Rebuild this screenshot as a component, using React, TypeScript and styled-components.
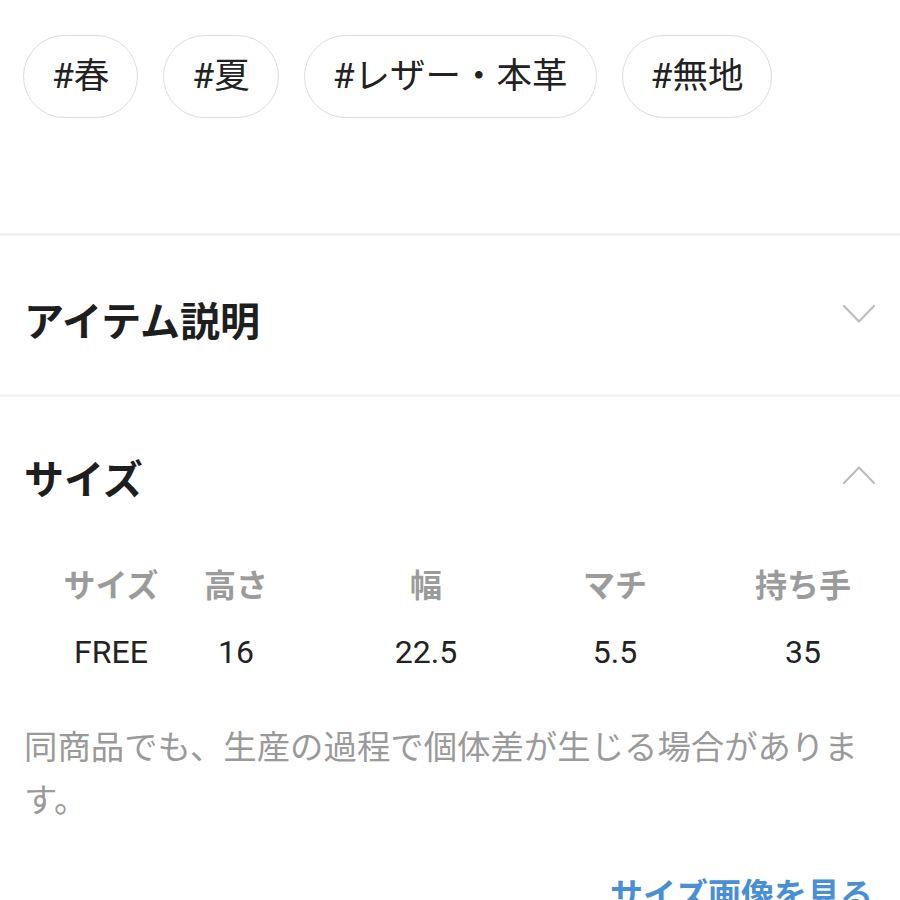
import React from "react";
import styled, { createGlobalStyle } from "styled-components";

const Global = createGlobalStyle`
  html, body { margin: 0; padding: 0; background: #fff; }
  body {
    font-family: Roboto, "Noto Sans CJK JP", sans-serif;
    color: #222;
    -webkit-font-smoothing: antialiased;
  }
`;

const Page = styled.div`
  width: 900px;
  height: 900px;
  overflow: hidden;
  background: #fff;
`;

const TagRow = styled.div`
  display: flex;
  gap: 25px;
  padding: 35px 23px 0;
`;

const Tag = styled.div`
  height: 83px;
  box-sizing: border-box;
  padding: 0 28px;
  display: flex;
  align-items: center;
  border: 1.5px solid #dcdcdc;
  border-radius: 42px;
  font-size: 35.5px;
  line-height: 1;
  color: #222;
  white-space: nowrap;
`;

const Divider = styled.div<{ $top: number }>`
  height: 3px;
  background: #f2f2f2;
  margin-top: ${(p) => p.$top}px;
`;

const SectionHeader = styled.div<{ $top: number; $bottom: number }>`
  display: flex;
  justify-content: space-between;
  align-items: flex-start;
  padding: ${(p) => p.$top}px 25px ${(p) => p.$bottom}px 24px;
`;

const Heading = styled.h2`
  margin: 0;
  font-size: 40px;
  line-height: 1;
  font-weight: 700;
  color: #1e1e1e;
`;

const ChevronBox = styled.svg<{ $shift: number }>`
  display: block;
  width: 32px;
  height: 18px;
  margin-top: ${(p) => p.$shift}px;
`;

const Table = styled.div`
  display: flex;
  flex-direction: column;
  gap: 34px;
  padding: 69px 24px 0;
`;

const TRow = styled.div`
  display: flex;
`;

const Cell = styled.div<{ $offset: number; $head?: boolean }>`
  width: 110px;
  flex: none;
  margin-left: ${(p) => p.$offset}px;
  text-align: center;
  font-size: 32px;
  line-height: 1;
  font-weight: ${(p) => (p.$head ? 700 : 400)};
  color: ${(p) => (p.$head ? "#9b9b9b" : "#222")};
  white-space: nowrap;
`;

const Note = styled.p`
  margin: 53px 0 0;
  padding: 0 24px;
  font-size: 33.4px;
  line-height: 53px;
  color: #9a9a9a;
`;

const LinkRow = styled.div`
  display: flex;
  justify-content: flex-end;
  padding: 52px 27px 0 24px;
`;

const SizeLink = styled.a`
  font-size: 33px;
  line-height: 1;
  font-weight: 700;
  color: #4a8fd3;
  text-decoration: none;
`;

function Chevron({ up, shift }: { up?: boolean; shift: number }) {
  return (
    <ChevronBox $shift={shift} viewBox="0 0 32 18" fill="none">
      <polyline
        points={up ? "1,17 16,1.5 31,17" : "1,1 16,16.5 31,1"}
        stroke="#bdbdbd"
        strokeWidth="2.2"
        strokeLinecap="round"
        strokeLinejoin="round"
      />
    </ChevronBox>
  );
}

const tags = ["#春", "#夏", "#レザー・本革", "#無地"];

const columns = [
  { label: "サイズ", value: "FREE", offset: 32 },
  { label: "高さ", value: "16", offset: 15 },
  { label: "幅", value: "22.5", offset: 80 },
  { label: "マチ", value: "5.5", offset: 79 },
  { label: "持ち手", value: "35", offset: 78 },
];

export default function App() {
  return (
    <Page>
      <Global />
      <TagRow>
        {tags.map((t) => (
          <Tag key={t}>{t}</Tag>
        ))}
      </TagRow>
      <Divider $top={115} />
      <SectionHeader $top={67} $bottom={51}>
        <Heading>アイテム説明</Heading>
        <Chevron shift={2} />
      </SectionHeader>
      <Divider $top={0} />
      <SectionHeader $top={64} $bottom={0}>
        <Heading>サイズ</Heading>
        <Chevron up shift={5} />
      </SectionHeader>
      <Table>
        <TRow>
          {columns.map((c) => (
            <Cell key={c.label} $offset={c.offset} $head>
              {c.label}
            </Cell>
          ))}
        </TRow>
        <TRow>
          {columns.map((c) => (
            <Cell key={c.label} $offset={c.offset}>
              {c.value}
            </Cell>
          ))}
        </TRow>
      </Table>
      <Note>同商品でも、生産の過程で個体差が生じる場合があります。</Note>
      <LinkRow>
        <SizeLink href="#">サイズ画像を見る</SizeLink>
      </LinkRow>
    </Page>
  );
}
